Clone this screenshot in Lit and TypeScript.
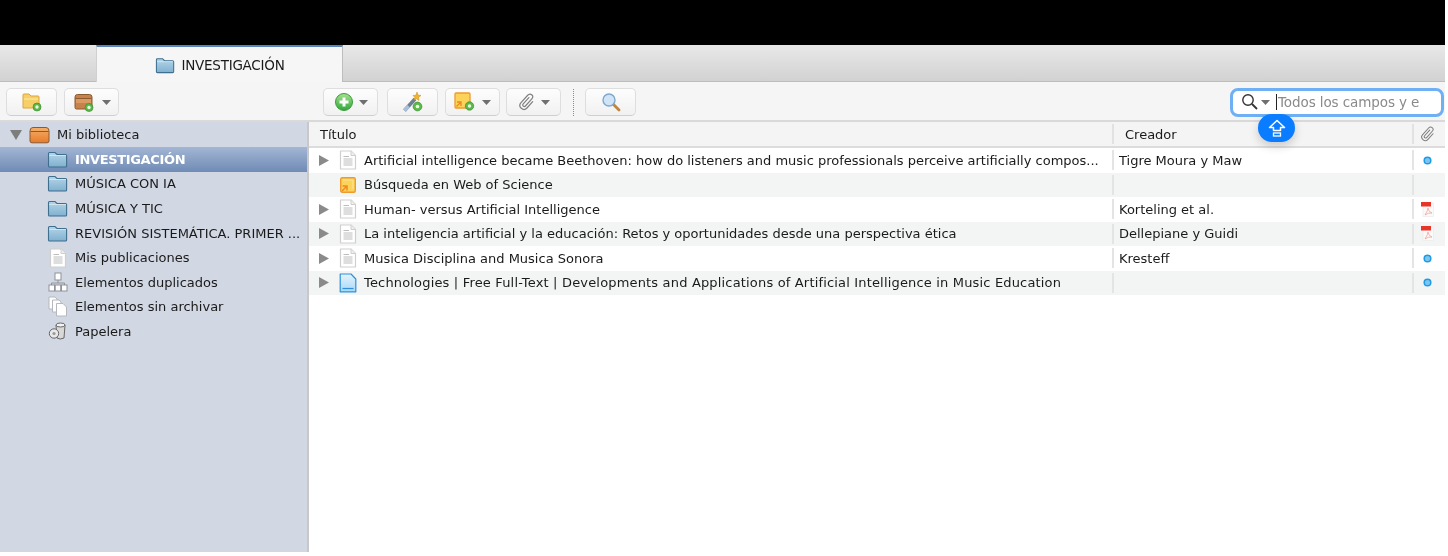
import { LitElement, html, css, svg } from "lit";
import { customElement } from "lit/decorators.js";

const folder = (w = 21, h = 17) => html`<svg width=${w} height=${h} viewBox="0 0 21 17"><defs><linearGradient id="fg" x1="0" y1="0" x2="0" y2="1"><stop offset="0" stop-color="#b5d5e8"/><stop offset="1" stop-color="#7fb0cf"/></linearGradient></defs><path d="M1.5 15V2.5Q1.5 1.5 2.5 1.5H8L10 3.5H18.5Q19.6 3.5 19.6 4.6V15Q19.6 16 18.5 16H2.5Q1.5 16 1.5 15Z" fill="url(#fg)" stroke="#3f6f8e" stroke-width="1.1"/><path d="M2.2 4.5H19" stroke="#dcebf3" stroke-width=".8"/></svg>`;

const doc = html`<svg width="18" height="20" viewBox="0 0 18 20"><path d="M1.5 1H12L16.5 5.5V19H1.5Z" fill="#fff" stroke="#cfcfcf" stroke-width="1.2" stroke-linejoin="round"/><path d="M12 1V5.5H16.5" fill="#eee" stroke="#cfcfcf"/><path d="M4.500 6.500H10M4.500 9H13.500M4.500 11H13.500M4.500 13H13.500M4.500 15H13.500" stroke="#bdbdbd" stroke-width="1"/></svg>`;

const webDoc = html`<svg width="18" height="20" viewBox="0 0 18 20"><defs><linearGradient id="wd" x1="0" y1="0" x2="0" y2="1"><stop offset="0" stop-color="#e4f3fd"/><stop offset="1" stop-color="#a9d8f6"/></linearGradient></defs><path d="M1.2 1H12L16.8 6V18.8H1.2Z" fill="url(#wd)" stroke="#2f8fda" stroke-width="1.2" stroke-linejoin="round"/><path d="M3.500 15.500H14.500" stroke="#2f8fda" stroke-width="1.2"/></svg>`;

const saved = (s = 16) => html`<svg width=${s} height=${s} viewBox="0 0 16 16"><rect x=".7" y=".7" width="14.6" height="14.6" rx="1.5" fill="#fbd35a" stroke="#ef9a2e" stroke-width="1.4"/><path d="M3 3H13V12" fill="none" stroke="#fde79a"/><path d="M2 14L7 9M2.500 9H7V13.500" fill="none" stroke="#ee8a1e" stroke-width="1.500"/></svg>`;

const plusBadge = (x: number, y: number, r = 3.6) => svg`<circle cx=${x} cy=${y} r=${r} fill="#5cb84a" stroke="#3c8f30" stroke-width=".7"/><circle cx=${x} cy=${y} r=${r * 0.42} fill="#eaf7e2"/>`;

const caret = html`<svg class="caret" width="9" height="5" viewBox="0 0 9 5"><path d="M0 0H9L4.500 5Z" fill="#6f6f6f"/></svg>`;

const icNewColl = html`<svg width="22" height="20" viewBox="0 0 22 20"><path d="M2 16V3Q2 2 3 2H8L10 4H17Q18 4 18 5V15Q18 16 17 16Z" fill="#f6d067" stroke="#dca53b"/><path d="M3 7H17" stroke="#fbe9ac"/>${plusBadge(16, 15, 4)}</svg>`;
const icNewLib = html`<svg width="24" height="20" viewBox="0 0 24 20"><path d="M2 5Q2 2.500 4.500 2.500H16.500Q19 2.500 19 5V15.500Q19 17 17.500 17H3.500Q2 17 2 15.500Z" fill="#c8814a" stroke="#8a5a30"/><path d="M2.500 6.500H18.500" stroke="#8a5a30"/><path d="M3 7H18V11H3Z" fill="#dc9a63"/>${plusBadge(16, 15.5, 4)}</svg>`;
const icAdd = html`<svg width="20" height="20" viewBox="0 0 20 20"><defs><linearGradient id="ga" x1="0" y1="0" x2="0" y2="1"><stop offset="0" stop-color="#a6e28c"/><stop offset="1" stop-color="#2fa83a"/></linearGradient></defs><circle cx="10" cy="10" r="8.500" fill="url(#ga)" stroke="#3c9a3c"/><path d="M10 5.500V14.500M5.500 10H14.500" stroke="#fff" stroke-width="3"/></svg>`;
const icWand = html`<svg width="22" height="22" viewBox="0 0 22 22"><path d="M2.500 19.500L13 8" stroke="#6f7f92" stroke-width="3.600"/><path d="M2.500 19.500L6.500 15" stroke="#a9c0d8" stroke-width="3.600"/><path d="M15 1L16 4L19 4.500L16.500 6.500L17 9.500L14.500 7.800L12 9L12.800 6.300L11 4.500L13.800 4.300Z" fill="#f0b52e" stroke="#c98a1a" stroke-width=".5"/>${plusBadge(15.5, 15.5, 4.4)}</svg>`;
const icNote = html`<svg width="23" height="22" viewBox="0 0 23 22"><rect x="1" y="2" width="15" height="15" rx="1" fill="#fbd35a" stroke="#ef9a2e" stroke-width="1.300"/><path d="M2.500 15.500L7 11M3 11H7V15" fill="none" stroke="#ee8a1e" stroke-width="1.400"/>${plusBadge(15.5, 15, 4.2)}</svg>`;
const clip = (s = 18, c = "#808080") => html`<svg width=${s} height=${s} viewBox="0 0 18 18"><path transform="rotate(42 9 9)" d="M7.500 4.500V13Q7.500 14.500 9 14.500Q10.500 14.500 10.500 13V3.500Q10.500 .5 8 .5Q5 .5 5 3.500V13.500Q5 17.500 9 17.500Q13 17.500 13 13.500V5" fill="none" stroke=${c} stroke-width="1.200" stroke-linecap="round"/></svg>`;
const icLens = html`<svg width="20" height="20" viewBox="0 0 20 20"><path d="M12 12L18 18" stroke="#c0853f" stroke-width="2.800" stroke-linecap="round"/><circle cx="8" cy="8" r="6" fill="#cfe4f7" stroke="#7ea7cd" stroke-width="1.400"/></svg>`;
const icLibrary = html`<svg width="21" height="18" viewBox="0 0 21 18"><defs><linearGradient id="lb" x1="0" y1="0" x2="0" y2="1"><stop offset="0" stop-color="#f5b06a"/><stop offset="1" stop-color="#e87a2a"/></linearGradient></defs><path d="M1 5Q1 1.500 4 1.500H17Q20 1.500 20 5V15Q20 16.800 18 16.800H3Q1 16.800 1 15Z" fill="url(#lb)" stroke="#8a5a30"/><path d="M1.500 5.500H19.500" stroke="#8a5a30"/></svg>`;
const icDup = html`<svg width="20" height="20" viewBox="0 0 20 20" fill="#fff" stroke="#8f9398"><rect x="7" y="1" width="6" height="7"/><path d="M10 8V11M3.500 13V11H16.500V13" fill="none"/><rect x="1" y="13" width="5.500" height="6"/><rect x="7.200" y="13" width="5.500" height="6"/><rect x="13.500" y="13" width="5.500" height="6"/></svg>`;
const icUnfiled = html`<svg width="20" height="21" viewBox="0 0 20 21" fill="#fff" stroke="#b5b8bc"><path d="M1 1H7L9 3V13H1Z"/><path d="M4.500 4H11L13 6V16H4.500Z"/><path d="M8.500 7.500H15L18.500 11V20H8.500Z"/></svg>`;
const icTrash = html`<svg width="20" height="20" viewBox="0 0 20 20"><path d="M8 4H17L16 17Q12 19 9 17Z" fill="#d8d8d8" stroke="#666"/><ellipse cx="12.500" cy="4" rx="4.500" ry="2" fill="#f2f2f2" stroke="#666"/><circle cx="6" cy="12.500" r="4.700" fill="#e8e8e8" stroke="#666"/><circle cx="6" cy="12.500" r="1.600" fill="#999"/></svg>`;
const dot = html`<svg width="9" height="9" viewBox="0 0 9 9"><circle cx="4.500" cy="4.500" r="3.300" fill="#7cc4f2" stroke="#1f9be0" stroke-width="1.500"/></svg>`;
const pdf = html`<svg width="13" height="15" viewBox="0 0 13 15"><rect x="2" y="1" width="10.500" height="13.500" fill="#fafafa" stroke="#e8e8e8" stroke-width=".6"/><rect x="0" y="0" width="10" height="4.500" fill="#e8352a"/><path d="M4 13Q7 8 7 6Q7.500 10 11 11Q7 10.500 4 13Z" fill="none" stroke="#ee9a90" stroke-width=".7"/></svg>`;

const sideRows = [
  { t: "INVESTIGACIÓN", i: folder(), sel: true },
  { t: "MÚSICA CON IA", i: folder() },
  { t: "MÚSICA Y TIC", i: folder() },
  { t: "REVISIÓN SISTEMÁTICA. PRIMER ...", i: folder() },
  { t: "Mis publicaciones", i: doc },
  { t: "Elementos duplicados", i: icDup },
  { t: "Elementos sin archivar", i: icUnfiled },
  { t: "Papelera", i: icTrash },
];

const rows = [
  { title: "Artificial intelligence became Beethoven: how do listeners and music professionals perceive artificially compos...", creator: "Tigre Moura y Maw", icon: doc, arrow: true, att: dot },
  { title: "Búsqueda en Web of Science", creator: "", icon: saved(), arrow: false, att: null },
  { title: "Human- versus Artificial Intelligence", creator: "Korteling et al.", icon: doc, arrow: true, att: pdf },
  { title: "La inteligencia artificial y la educación: Retos y oportunidades desde una perspectiva ética", creator: "Dellepiane y Guidi", icon: doc, arrow: true, att: pdf },
  { title: "Musica Disciplina and Musica Sonora", creator: "Kresteff", icon: doc, arrow: true, att: dot },
  { title: "Technologies | Free Full-Text | Developments and Applications of Artificial Intelligence in Music Education", creator: "", icon: webDoc, arrow: true, att: dot, narrow: true },
];

@customElement("app-root")
export class AppRoot extends LitElement {
  static styles = css`
    :host { display: block; width: 1448px; height: 556px; background: #fff; overflow: hidden;
      font-family: "DejaVu Sans", sans-serif; font-size: 13px; letter-spacing: 0; color: #1a1a1a; }
    .app { width: 1445px; height: 552px; display: flex; flex-direction: column; filter: blur(0.3px); }
    .black { height: 45px; flex: none; background: #000; }
    .tabbar { height: 37px; flex: none; display: flex; padding-left: 96px; background: linear-gradient(#e8e8e8, #d2d2d2); border-bottom: 1px solid #bdbdbd; box-sizing: border-box; }
    .tab { width: 247px; height: 37px; box-sizing: border-box; border-top: 2px solid #5b83bd; border-right: 1px solid #bdbdbd; border-left: 1px solid #d0d0d0; background: #f6f6f6; display: flex; align-items: center; justify-content: center; gap: 7px; font-size: 13.5px; letter-spacing: -0.25px; }
    .tab svg { margin-top: 2px; }
    .toolbar { height: 40px; flex: none; box-sizing: border-box; background: #f5f5f5; border-bottom: 2px solid #d9d9d9; display: flex; align-items: center; position: relative; padding: 2px 1px 0 6px; }
    .btn { height: 28px; box-sizing: border-box; background: linear-gradient(#fdfdfd, #f1f1f1); border: 1px solid #dedede; border-bottom-color: #cfcfcf; border-radius: 5px; display: flex; align-items: center; justify-content: center; gap: 5px; }
    .w51 { width: 51px; } .w55 { width: 55px; }
    .m7 { margin-left: 7px; } .m204 { margin-left: 204px; } .m9 { margin-left: 9px; } .m6 { margin-left: 6px; } .m12 { margin-left: 12px; } .m11 { margin-left: 11px; }
    .sep { width: 0; height: 27px; border-left: 1px dotted #8c8c8c; }
    .search { margin-left: auto; width: 214px; height: 29px; box-sizing: border-box; border: 3px solid #6fb0f5; border-radius: 8px; background: #fff; display: flex; align-items: center; padding-left: 8px; gap: 2px; position: relative; color: #8a8a8a; font-size: 13.5px; letter-spacing: -0.1px; white-space: nowrap; }
    .search span { margin-left: -1px; }
    .cursor { width: 1px; height: 16px; background: #222; margin: 0 0 0 4px; }
    .badge { position: absolute; left: 25px; top: 23px; width: 37px; height: 28px; border-radius: 14px; background: #0a7cff; display: flex; align-items: center; justify-content: center; box-shadow: 0 4px 10px rgba(0,0,0,.18); z-index: 2; }
    .main { flex: 1; display: flex; min-height: 0; }
    .side { width: 307px; flex: none; background: #d1d7e3; border-right: 2px solid #c8c8c8; box-sizing: content-box; }
    .root { height: 25px; display: flex; align-items: center; padding-left: 10px; box-sizing: border-box; }
    .root .tri { margin-right: 7px; }
    .root span { margin-left: 7px; }
    .srow { height: 24.6px; display: flex; align-items: center; padding-left: 47px; gap: 7px; white-space: nowrap; box-sizing: border-box; }
    .srow .ic { width: 21px; display: flex; justify-content: center; flex: none; }
    .srow.sel { background: linear-gradient(#a3b6d4, #6f8bb5); color: #fff; font-weight: 700; letter-spacing: -0.35px; }
    .table { flex: 1; min-width: 0; display: flex; flex-direction: column; background: #fff; }
    .thead { height: 26px; flex: none; box-sizing: border-box; background: #f4f4f4; border-bottom: 2px solid #dcdcdc; display: grid; grid-template-columns: 803px 300px 1fr; align-items: center; }
    .thead > div { height: 20px; display: flex; align-items: center; box-sizing: border-box; }
    .thead .c1 { padding-left: 11px; }
    .thead .c2 { padding-left: 11px; border-left: 2px solid #e2e2e2; }
    .thead .c3 { justify-content: center; border-left: 2px solid #e2e2e2; padding-right: 4px; }
    .trow { height: 24.5px; display: grid; grid-template-columns: 803px 300px 1fr; align-items: center; white-space: nowrap; }
    .trow:nth-child(even) { background: #f3f5f5; }
    .tc1 { display: flex; align-items: center; padding-left: 10px; min-width: 0; }
    .tc1 .wide { letter-spacing: 0.17px; }
    .arrow { width: 20px; flex: none; display: flex; }
    .tic { width: 18px; flex: none; display: flex; justify-content: center; margin-right: 7px; }
    .tc2, .tc3 { height: 20px; display: flex; align-items: center; border-left: 2px solid #e4e4e4; box-sizing: border-box; }
    .tc2 { padding-left: 5px; }
    .tc3 { justify-content: center; padding-right: 4px; }
  `;

  render() {
    const tri = (c: string) => html`<svg width="10" height="11" viewBox="0 0 10 11"><path d="M0 0L10 5.500L0 11Z" fill=${c}/></svg>`;
    return html`<div class="app">
      <div class="black"></div>
      <div class="tabbar"><div class="tab">${folder(20, 17)}<span>INVESTIGACIÓN</span></div></div>
      <div class="toolbar">
        <div class="btn w51">${icNewColl}</div>
        <div class="btn w55 m7">${icNewLib}${caret}</div>
        <div class="btn w55 m204">${icAdd}${caret}</div>
        <div class="btn w51 m9">${icWand}</div>
        <div class="btn w55 m7">${icNote}${caret}</div>
        <div class="btn w55 m6">${clip()}${caret}</div>
        <div class="sep m12"></div>
        <div class="btn w51 m11">${icLens}</div>
        <div class="search">
          <svg width="18" height="18" viewBox="0 0 18 18"><circle cx="7" cy="7" r="5.200" fill="none" stroke="#333" stroke-width="1.400"/><path d="M11 11L16 16" stroke="#333" stroke-width="1.800"/></svg>
          ${caret}
          <div class="cursor"></div><span>Todos los campos y e</span>
          <div class="badge"><svg width="18" height="18" viewBox="0 0 18 18"><path d="M9 1.500L16.500 8.500H12.500V11.500H5.500V8.500H1.500Z" fill="none" stroke="#fff" stroke-width="1.500" stroke-linejoin="round"/><rect x="5.500" y="14" width="7" height="3" fill="none" stroke="#fff" stroke-width="1.300"/></svg></div>
        </div>
      </div>
      <div class="main">
        <div class="side">
          <div class="root"><svg width="12" height="10" viewBox="0 0 12 10" class="tri"><path d="M0 0H12L6 10Z" fill="#7d7d7d"/></svg>${icLibrary}<span>Mi biblioteca</span></div>
          ${sideRows.map((r) => html`<div class="srow ${r.sel ? "sel" : ""}"><div class="ic">${r.i}</div><span>${r.t}</span></div>`)}
        </div>
        <div class="table">
          <div class="thead"><div class="c1">Título</div><div class="c2">Creador</div><div class="c3">${clip(16)}</div></div>
          <div>
            ${rows.map((r) => html`<div class="trow">
              <div class="tc1"><div class="arrow">${r.arrow ? tri("#8a8a8a") : ""}</div><div class="tic">${r.icon}</div><span class=${r.narrow ? "wide" : ""}>${r.title}</span></div>
              <div class="tc2">${r.creator}</div>
              <div class="tc3">${r.att ?? ""}</div>
            </div>`)}
          </div>
        </div>
      </div>
    </div>`;
  }
}
